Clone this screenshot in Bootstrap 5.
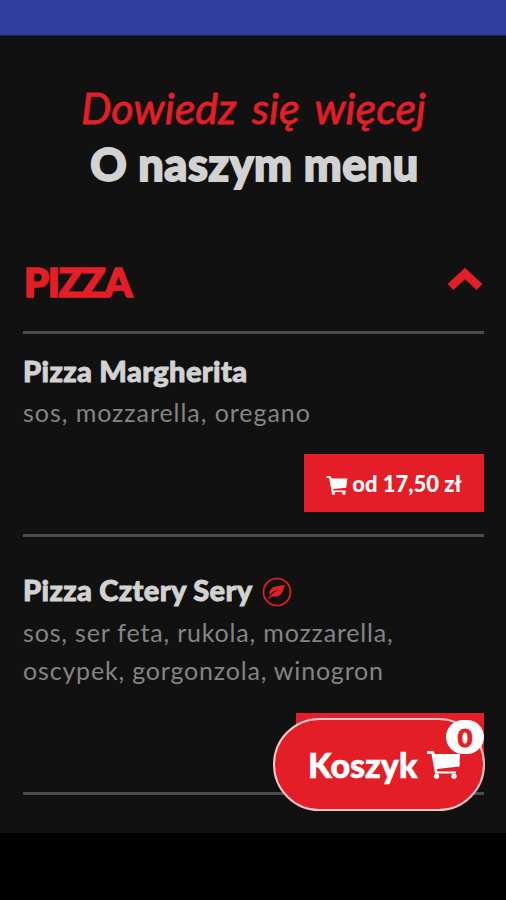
<!DOCTYPE html>
<html lang="pl">
<head>
<meta charset="utf-8">
<meta name="viewport" content="width=device-width, initial-scale=1">
<title>O naszym menu</title>
<link href="https://cdn.jsdelivr.net/npm/bootstrap@5.3.0/dist/css/bootstrap.min.css" rel="stylesheet">
<style>
:root{--red:#e41e26}
body{font-family:Lato,"Open Sans",sans-serif;background:#111;height:900px;overflow:hidden}
.statusbar{height:36px;background:#303f9f;border-bottom:1px solid #1c2663}
.navstrip{height:67px;background:#000}
.content{height:797px;padding:0 22px 0 23px}
.red{color:var(--red)}
.script-title{font-size:43px;font-style:italic;line-height:56px;padding-top:44px;letter-spacing:.1px;word-spacing:5px;-webkit-text-stroke:.8px var(--red)}
.main-title{font-size:45px;font-weight:900;line-height:56px;color:#d2d2d2;letter-spacing:.5px;padding-left:2px;-webkit-text-stroke:1.8px #d2d2d2}
.section-head{height:105px;margin-top:37px;padding-top:29px;border-bottom:3px solid #4b4b4b}
.section-title{font-size:40px;font-weight:900;line-height:48px;letter-spacing:-1.4px;padding-left:1px;-webkit-text-stroke:1.6px var(--red)}
.chevron{margin-top:5px}
.item{border-bottom:3px solid #4b4b4b;white-space:nowrap}
.item-a{height:203px;padding-top:18px}
.item-b{height:258px;padding-top:34px}
.item-name{font-size:29px;font-weight:900;line-height:38px;color:#d2d2d2;letter-spacing:.35px;-webkit-text-stroke:.9px #d2d2d2}
.leaf{margin:4px 0 0 10px}
.item-text{font-size:25px;line-height:38px;color:#848484;margin-top:3px;letter-spacing:.95px}
.item-b .item-text{letter-spacing:.82px;margin-top:4px}
.price{width:180px;height:58px;margin-top:23px;background:var(--red);color:#fff;font-size:22px;font-weight:900}
.price-b{width:188px;margin-top:24px}
.basket{position:absolute;left:273px;top:718px;width:212px;height:93px;border:2px solid #f6c6c8;border-radius:47px;background:var(--red);color:#fff;font-size:34px;font-weight:900;padding-left:33px}
.bk{-webkit-text-stroke:.6px #fff}
.cart{margin-left:10px}
.counter{position:absolute;left:171px;top:0;width:38px;height:34px;border-radius:17px;background:#fff;color:var(--red);font-size:25px;line-height:35px;-webkit-text-stroke:1.2px var(--red)}
</style>
</head>
<body class="position-relative m-0">
<div class="statusbar"></div>
<main class="content">
  <header class="text-center text-nowrap">
    <div class="script-title red">Dowiedz się więcej</div>
    <h1 class="main-title m-0">O naszym menu</h1>
  </header>
  <div class="section-head d-flex justify-content-between align-items-start">
    <h2 class="section-title red m-0">PIZZA</h2>
    <svg class="chevron" width="38" height="34" viewBox="0 0 38 34"><path d="M4.500 24 19 10.500 33.500 24" fill="none" stroke="#e41e26" stroke-width="8.500"/></svg>
  </div>
  <section class="item item-a">
    <h3 class="item-name m-0">Pizza Margherita</h3>
    <div class="item-text">sos, mozzarella, oregano</div>
    <div class="price ms-auto d-flex align-items-center justify-content-center">
      <svg class="me-1 mt-1" width="22" height="19" viewBox="0 0 32 29"><path d="M0 0h6l2 4h24l-2 14-20 2 .5 2H29v2.500H8L4 3H0z" fill="#fff"/><circle cx="10.500" cy="26" r="2.800" fill="#fff"/><circle cx="26.500" cy="26" r="2.800" fill="#fff"/></svg>
      <span>od 17,50 zł</span>
    </div>
  </section>
  <section class="item item-b">
    <h3 class="item-name m-0 d-flex align-items-center">Pizza Cztery Sery
      <svg class="leaf" width="30" height="30" viewBox="0 0 30 30"><circle cx="15" cy="15" r="13.500" fill="none" stroke="#e41e26" stroke-width="1.700"/><path d="M22.500 8C17 9 10 8.500 7.500 14.500q-.6 2 .2 3.200Q11 14 17 12.500 10 15.500 6.500 21l1.200.8 2-2.300C19 21 21.500 15 22.500 8z" fill="#e41e26"/></svg>
    </h3>
    <div class="item-text">sos, ser feta, rukola, mozzarella,<br>oscypek, gorgonzola, winogron</div>
    <div class="price price-b ms-auto"></div>
  </section>
</main>
<div class="navstrip"></div>
<div class="basket d-flex align-items-center">
  <span class="bk">Koszyk</span>
  <svg class="cart" width="33" height="28" viewBox="0 0 33 28"><path d="M0 0h6.500l1.500 3h25l-.5 12.500L10 18l.5 2.500H29v2H8L4.500 3H0z" fill="#fff"/><circle cx="9.500" cy="25.200" r="2.600" fill="#fff"/><circle cx="27" cy="25.200" r="2.600" fill="#fff"/></svg>
  <span class="counter text-center">0</span>
</div>
<script src="https://cdn.jsdelivr.net/npm/bootstrap@5.3.0/dist/js/bootstrap.bundle.min.js"></script>
</body>
</html>
